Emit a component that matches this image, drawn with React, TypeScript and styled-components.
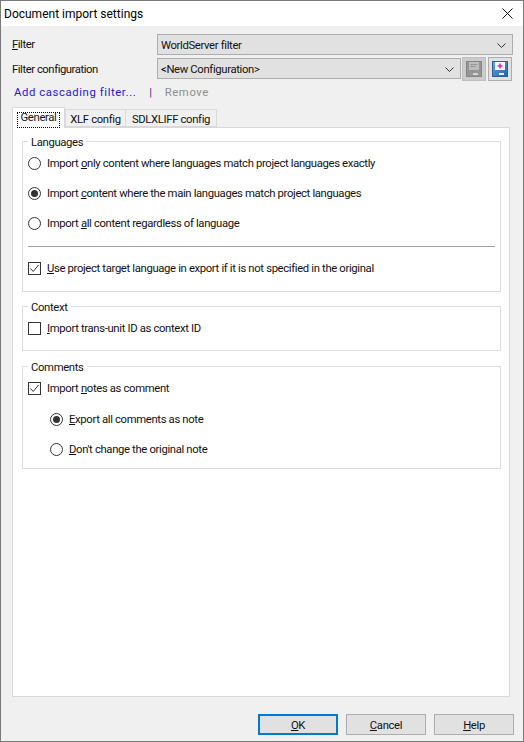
import React from "react";
import styled, { createGlobalStyle } from "styled-components";

const Global = createGlobalStyle`
  html, body { margin: 0; padding: 0; background: #f0f0f0; }
  * { box-sizing: border-box; }
`;

const Win = styled.div`
  width: 524px;
  height: 742px;
  border: 1px solid #7a7a7a;
  display: flex;
  flex-direction: column;
  background: #f0f0f0;
  font-family: "Roboto", "Open Sans", sans-serif;
  font-size: 11.3px;
  letter-spacing: -0.35px;
  color: #111;
  overflow: hidden;
`;
const TitleBar = styled.div`
  height: 25px;
  background: #fff;
  display: flex;
  align-items: center;
  justify-content: space-between;
  padding: 0 10px 0 3px;
  font-size: 12px;
  letter-spacing: 0;
  color: #000;
`;
const Close = styled.svg`
  width: 11px;
  height: 11px;
  stroke: #111;
  stroke-width: 1;
  fill: none;
`;
const Body = styled.div`
  flex: 1;
  display: flex;
  flex-direction: column;
  padding: 8px 10px 6px 11px;
  min-height: 0;
`;
const FormRow = styled.div<{ $h: number; $mb?: number }>`
  display: flex;
  align-items: center;
  height: ${(p) => p.$h}px;
  margin-bottom: ${(p) => p.$mb ?? 0}px;
`;
const FieldLabel = styled.div`
  width: 145px;
  flex: none;
  letter-spacing: -0.45px;
`;
const Select = styled.div<{ $mb?: number }>`
  flex: 1;
  height: 21px;
  margin-bottom: ${(p) => p.$mb ?? 0}px;
  background: #e1e1e1;
  border: 1px solid #adadad;
  display: flex;
  align-items: center;
  justify-content: space-between;
  padding: 2px 6px 0 3px;
`;
const Chevron = styled.svg`
  width: 9px;
  height: 6px;
  stroke: #333;
  stroke-width: 1;
  fill: none;
`;
const IconBtn = styled.div<{ $disabled?: boolean }>`
  width: 24px;
  height: 24px;
  flex: none;
  margin-left: ${(p) => (p.$disabled ? "1px" : "2px")};
  margin-right: ${(p) => (p.$disabled ? "0" : "1px")};
  background: ${(p) => (p.$disabled ? "#cccccc" : "#e1e1e1")};
  border: 1px solid ${(p) => (p.$disabled ? "#bfbfbf" : "#adadad")};
  display: flex;
  align-items: center;
  justify-content: center;
`;
const LinkRow = styled.div`
  display: flex;
  align-items: center;
  height: 22px;
  padding-left: 2px;
  letter-spacing: 0.6px;
`;
const LinkText = styled.span`
  color: #2a17c9;
`;
const Pipe = styled.span`
  color: #4b2a86;
  margin: 0 12px 0 13px;
`;
const Disabled = styled.span`
  color: #8e8e8e;
`;
const Tabs = styled.div`
  display: flex;
  align-items: flex-end;
  height: 20px;
  margin-top: 4px;
`;
const Tab = styled.div<{ $active?: boolean; $w: number; $ml?: number }>`
  width: ${(p) => p.$w}px;
  height: ${(p) => (p.$active ? 21 : 18)}px;
  padding-top: ${(p) => (p.$active ? 0 : 2)}px;
  background: ${(p) => (p.$active ? "#fff" : "#f0f0f0")};
  border: 1px solid #d9d9d9;
  border-bottom: ${(p) => (p.$active ? "none" : "1px solid #d9d9d9")};
  margin-left: ${(p) => p.$ml ?? 0}px;
  margin-bottom: ${(p) => (p.$active ? -1 : 0)}px;
  position: relative;
  z-index: ${(p) => (p.$active ? 1 : 0)};
  display: flex;
  align-items: center;
  justify-content: center;
`;
const FocusText = styled.span`
  display: block;
  outline: 1px dotted #000;
  padding: 0 3px;
  height: 14px;
  line-height: 10px;
  margin-top: 3px;
`;
const Panel = styled.div`
  flex: 1;
  background: #fff;
  border: 1px solid #d9d9d9;
  margin-right: 3px;
  padding: 6px 8px 6px 9px;
  display: flex;
  flex-direction: column;
  min-height: 0;
`;
const Group = styled.fieldset<{ $h: number; $mt?: number }>`
  height: ${(p) => p.$h}px;
  margin: ${(p) => p.$mt ?? 0}px 0 0 0;
  padding: 0 5px;
  border: 1px solid #dcdcdc;
  min-width: 0;
  flex: none;
`;
const Legend = styled.legend`
  padding: 4px 3px 0;
  margin-left: 0;
  line-height: 10px;
`;
const OptionRow = styled.div<{ $indent?: boolean; $h?: number }>`
  display: flex;
  align-items: center;
  height: ${(p) => p.$h ?? 30}px;
  padding-left: ${(p) => (p.$indent ? "22px" : "0")};
`;
const Radio = styled.span<{ $on?: boolean }>`
  width: 13px;
  height: 13px;
  flex: none;
  border-radius: 50%;
  border: 1px solid #333;
  background: #fff;
  margin-right: 6px;
  display: flex;
  align-items: center;
  justify-content: center;
  &::after {
    content: "";
    display: ${(p) => (p.$on ? "block" : "none")};
    width: 7px;
    height: 7px;
    border-radius: 50%;
    background: #333;
  }
`;
const Check = styled.span`
  width: 13px;
  height: 13px;
  flex: none;
  border: 1px solid #333;
  background: #fff;
  margin-right: 6px;
  display: flex;
  align-items: center;
  justify-content: center;
`;
const CheckMark = styled.svg`
  width: 11px;
  height: 11px;
  stroke: #333;
  stroke-width: 1;
  fill: none;
`;
const Rule = styled.div`
  height: 1px;
  background: #a0a0a0;
  margin: 7px 0 0;
`;
const Footer = styled.div`
  display: flex;
  justify-content: flex-end;
  gap: 8px;
  margin-top: 17px;
  margin-right: -1px;
`;
const Btn = styled.div<{ $primary?: boolean }>`
  width: 80px;
  height: 21px;
  padding-top: 2px;
  background: #e1e1e1;
  border: ${(p) => (p.$primary ? "2px solid #0078d7" : "1px solid #adadad")};
  display: flex;
  align-items: center;
  justify-content: center;
`;
const U = styled.span`
  text-decoration: underline;
`;

const SaveIcon = ({ disabled, plus }: { disabled?: boolean; plus?: boolean }) => (
  <svg width="16" height="16" viewBox="0 0 16 16">
    <defs>
      <linearGradient id="saveBlue" x1="0" y1="0" x2="1" y2="1">
        <stop offset="0" stopColor="#6aa9e0" />
        <stop offset="1" stopColor="#1f5fa8" />
      </linearGradient>
    </defs>
    <rect x="0" y="0" width="16" height="16" fill={disabled ? "#959595" : "url(#saveBlue)"} />
    <rect x="0.5" y="0.5" width="15" height="15" fill="none" stroke={disabled ? "#858585" : "#2c5f9e"} />
    <rect x="3" y="1" width="10" height="8" fill={disabled ? "#bdbdbd" : "#f4f8fc"} />
    {plus ? (
      <path d="M8 2.5v5M5.5 5h5" stroke="#e8289c" strokeWidth="1.6" />
    ) : (
      <path d="M4.5 3.5h7M4.5 5.5h5" stroke="#959595" strokeWidth="1" />
    )}
    <rect x="7" y="12" width="5" height="2" fill={disabled ? "#d6d6d6" : "#e6eef8"} />
  </svg>
);

const ChevronIcon = () => (
  <Chevron viewBox="0 0 9 6">
    <path d="M0.5 0.5L4.5 4.5L8.5 0.5" />
  </Chevron>
);

const Tick = () => (
  <CheckMark viewBox="0 0 11 11">
    <path d="M1.5 5.5L4.2 8.5L9.5 2" />
  </CheckMark>
);

export default function App() {
  return (
    <>
      <Global />
      <Win>
        <TitleBar>
          <span>Document import settings</span>
          <Close viewBox="0 0 11 11">
            <path d="M0.5 0.5L10.5 10.5M10.5 0.5L0.5 10.5" />
          </Close>
        </TitleBar>
        <Body>
          <FormRow $h={21} $mb={2}>
            <FieldLabel>
              <U>F</U>ilter
            </FieldLabel>
            <Select>
              <span>WorldServer filter</span>
              <ChevronIcon />
            </Select>
          </FormRow>
          <FormRow $h={24}>
            <FieldLabel>Filter configuration</FieldLabel>
            <Select $mb={1}>
              <span>&lt;New Configuration&gt;</span>
              <ChevronIcon />
            </Select>
            <IconBtn $disabled>
              <SaveIcon disabled />
            </IconBtn>
            <IconBtn>
              <SaveIcon plus />
            </IconBtn>
          </FormRow>
          <LinkRow>
            <LinkText>Add cascading filter...</LinkText>
            <Pipe>|</Pipe>
            <Disabled>Remove</Disabled>
          </LinkRow>
          <Tabs>
            <Tab $active $w={53}>
              <FocusText>General</FocusText>
            </Tab>
            <Tab $w={61}>XLF config</Tab>
            <Tab $w={92} $ml={-1}>
              SDLXLIFF config
            </Tab>
          </Tabs>
          <Panel>
            <Group $h={158}>
              <Legend>Languages</Legend>
              <OptionRow $h={31}>
                <Radio />
                <span>
                  Import <U>o</U>nly content where languages match project languages exactly
                </span>
              </OptionRow>
              <OptionRow $h={29}>
                <Radio $on />
                <span>
                  Import <U>c</U>ontent where the main languages match project languages
                </span>
              </OptionRow>
              <OptionRow $h={31}>
                <Radio />
                <span>
                  Import <U>a</U>ll content regardless of language
                </span>
              </OptionRow>
              <Rule />
              <OptionRow $h={43}>
                <Check>
                  <Tick />
                </Check>
                <span>
                  <U>U</U>se project target language in export if it is not specified in the original
                </span>
              </OptionRow>
            </Group>
            <Group $h={52} $mt={7}>
              <Legend>Context</Legend>
              <OptionRow>
                <Check />
                <span>
                  <U>I</U>mport trans-unit ID as context ID
                </span>
              </OptionRow>
            </Group>
            <Group $h={110} $mt={8}>
              <Legend>Comments</Legend>
              <OptionRow>
                <Check>
                  <Tick />
                </Check>
                <span>
                  Import <U>n</U>otes as comment
                </span>
              </OptionRow>
              <OptionRow $indent $h={32}>
                <Radio $on />
                <span>
                  <U>E</U>xport all comments as note
                </span>
              </OptionRow>
              <OptionRow $indent $h={28}>
                <Radio />
                <span>
                  <U>D</U>on't change the original note
                </span>
              </OptionRow>
            </Group>
          </Panel>
          <Footer>
            <Btn $primary>
              <span>
                <U>O</U>K
              </span>
            </Btn>
            <Btn>
              <span>
                <U>C</U>ancel
              </span>
            </Btn>
            <Btn>
              <span>
                <U>H</U>elp
              </span>
            </Btn>
          </Footer>
        </Body>
      </Win>
    </>
  );
}
